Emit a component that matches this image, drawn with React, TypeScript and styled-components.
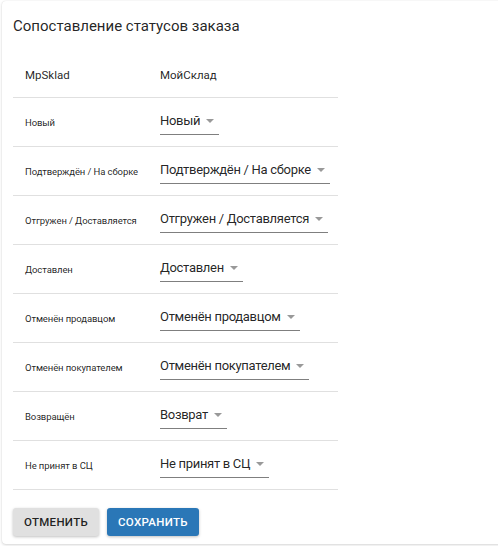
import React from "react";
import styled, { createGlobalStyle } from "styled-components";

const GlobalStyle = createGlobalStyle`
  html, body {
    margin: 0;
    padding: 0;
    background: #fff;
    overflow: hidden;
  }
  body {
    font-family: Roboto, "Liberation Sans", sans-serif;
    color: rgba(0, 0, 0, 0.87);
  }
`;

interface Row {
  source: string;
  target: string;
}

const rows: Row[] = [
  { source: "Новый", target: "Новый" },
  { source: "Подтверждён / На сборке", target: "Подтверждён / На сборке" },
  { source: "Отгружен / Доставляется", target: "Отгружен / Доставляется" },
  { source: "Доставлен", target: "Доставлен" },
  { source: "Отменён продавцом", target: "Отменён продавцом" },
  { source: "Отменён покупателем", target: "Отменён покупателем" },
  { source: "Возвращён", target: "Возврат" },
  { source: "Не принят в СЦ", target: "Не принят в СЦ" },
];

const Select = ({ value }: { value: string }) => (
  <SelectBox>
    <SelectText>{value}</SelectText>
    <Caret viewBox="0 0 10 5">
      <path d="M0 0 L10 0 L5 5 Z" fill="rgba(0,0,0,0.4)" />
    </Caret>
  </SelectBox>
);

const App = () => {
  return (
    <Page>
      <GlobalStyle />
      <Card>
        <Title>Сопоставление статусов заказа</Title>
        <Table>
          <HeadRow>
            <HeadCell>MpSklad</HeadCell>
            <HeadCell>МойСклад</HeadCell>
          </HeadRow>
          {rows.map((r) => (
            <BodyRow key={r.source}>
              <Label>{r.source}</Label>
              <Cell>
                <Select value={r.target} />
              </Cell>
            </BodyRow>
          ))}
        </Table>
        <Actions>
          <Button>Отменить</Button>
          <Button primary>Сохранить</Button>
        </Actions>
      </Card>
    </Page>
  );
};

export default App;

const Page = styled.div`
  width: 100vw;
  height: 100vh;
  overflow: hidden;
  padding: 1px 0 0 2px;
  box-sizing: border-box;
`;

const Card = styled.div`
  width: calc(100% + 8px);
  height: 543px;
  box-sizing: border-box;
  background: #fff;
  border-radius: 4px;
  box-shadow: 0 1px 3px rgba(0, 0, 0, 0.16), 0 0 1px rgba(0, 0, 0, 0.12);
  padding: 14px 11px 8px;
`;

const Title = styled.h2`
  margin: 0;
  font-size: 15px;
  font-weight: 400;
  line-height: 22px;
`;

const Table = styled.div`
  width: 325px;
  margin-top: 12px;
`;

const HeadRow = styled.div`
  display: grid;
  grid-template-columns: 135px 1fr;
  align-items: center;
  height: 48px;
  border-bottom: 1px solid #e0e0e0;
  padding-left: 12px;
`;

const HeadCell = styled.div`
  font-size: 11.5px;
  padding-top: 3px;
  white-space: nowrap;
`;

const BodyRow = styled.div`
  display: grid;
  grid-template-columns: 135px 1fr;
  align-items: center;
  height: 48px;
  border-bottom: 1px solid #e0e0e0;
  padding-left: 12px;
`;

const Label = styled.div`
  font-size: 9.5px;
  letter-spacing: -0.1px;
  white-space: nowrap;
`;

const Cell = styled.div`
  display: flex;
`;

const SelectBox = styled.div`
  display: inline-flex;
  align-items: center;
  gap: 6px;
  padding: 4px 5px 5px 0;
  border-bottom: 1px solid rgba(0, 0, 0, 0.5);
`;

const SelectText = styled.span`
  font-size: 13px;
  letter-spacing: -0.3px;
  line-height: 16px;
  white-space: nowrap;
`;

const Caret = styled.svg`
  width: 8px;
  height: 4px;
`;

const Actions = styled.div`
  display: flex;
  gap: 8px;
  margin-top: 18px;
`;

const Button = styled.button<{ primary?: boolean }>`
  font-family: inherit;
  font-size: 11.5px;
  font-weight: 500;
  text-transform: uppercase;
  letter-spacing: 0.3px;
  height: 28px;
  padding: 0 11px;
  border: none;
  border-radius: 3px;
  background: ${(p) => (p.primary ? "#2a77b7" : "#e0e0e0")};
  color: ${(p) => (p.primary ? "#fff" : "rgba(0, 0, 0, 0.87)")};
  box-shadow: 0 1px 3px rgba(0, 0, 0, 0.25);
`;
